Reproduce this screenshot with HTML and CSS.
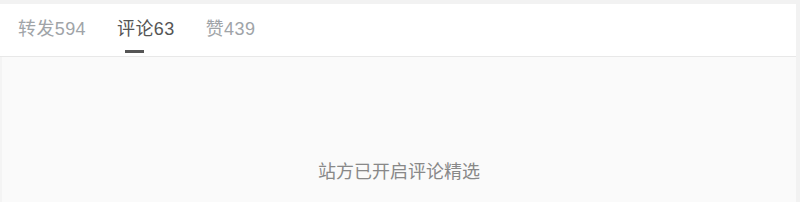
FILE: index.html
```html
<!DOCTYPE html>
<html lang="zh-CN">
<head>
    <meta charset="UTF-8">
    <meta name="viewport" content="width=device-width, initial-scale=1.0">
    <title>评论</title>
    <link rel="stylesheet" href="styles.css">
</head>
<body>
    <div class="card">
        <div class="tabs">
            <span class="tab">转发594</span>
            <span class="tab ativo">评论63</span>
            <span class="tab">赞439</span>
        </div>
        <div class="conteudo">
            <p class="aviso">站方已开启评论精选</p>
        </div>
    </div>
</body>
</html>
```
FILE: styles.css
```css
body {
    margin: 0;
    background: #f2f2f2;
    font-family: "Liberation Sans", "Noto Sans CJK SC", sans-serif;
}
.card {
    margin: 4px 4px 0 0;
    height: 198px;
    background: #fafafa;
}
.tabs {
    display: flex;
    gap: 31px;
    height: 52px;
    padding-left: 18px;
    background: white;
    border-bottom: 1px solid #e8e8e8;
    align-items: center;
}
.tab {
    position: relative;
    font-size: 18px;
    letter-spacing: 0.4px;
    color: #a0a4a8;
    line-height: 20px;
    padding-bottom: 2px;
}
.ativo {
    color: #555;
}
.ativo::after {
    content: "";
    position: absolute;
    left: 8px;
    top: 31px;
    width: 19px;
    height: 3px;
    background: #555;
}
.conteudo {
    height: 145px;
    box-sizing: border-box;
    padding-top: 102px;
    text-align: center;
    border-left: 2px solid #f4f4f4;
}
.aviso {
    margin: 0;
    font-size: 18px;
    line-height: 26px;
    color: #888;
}
```
